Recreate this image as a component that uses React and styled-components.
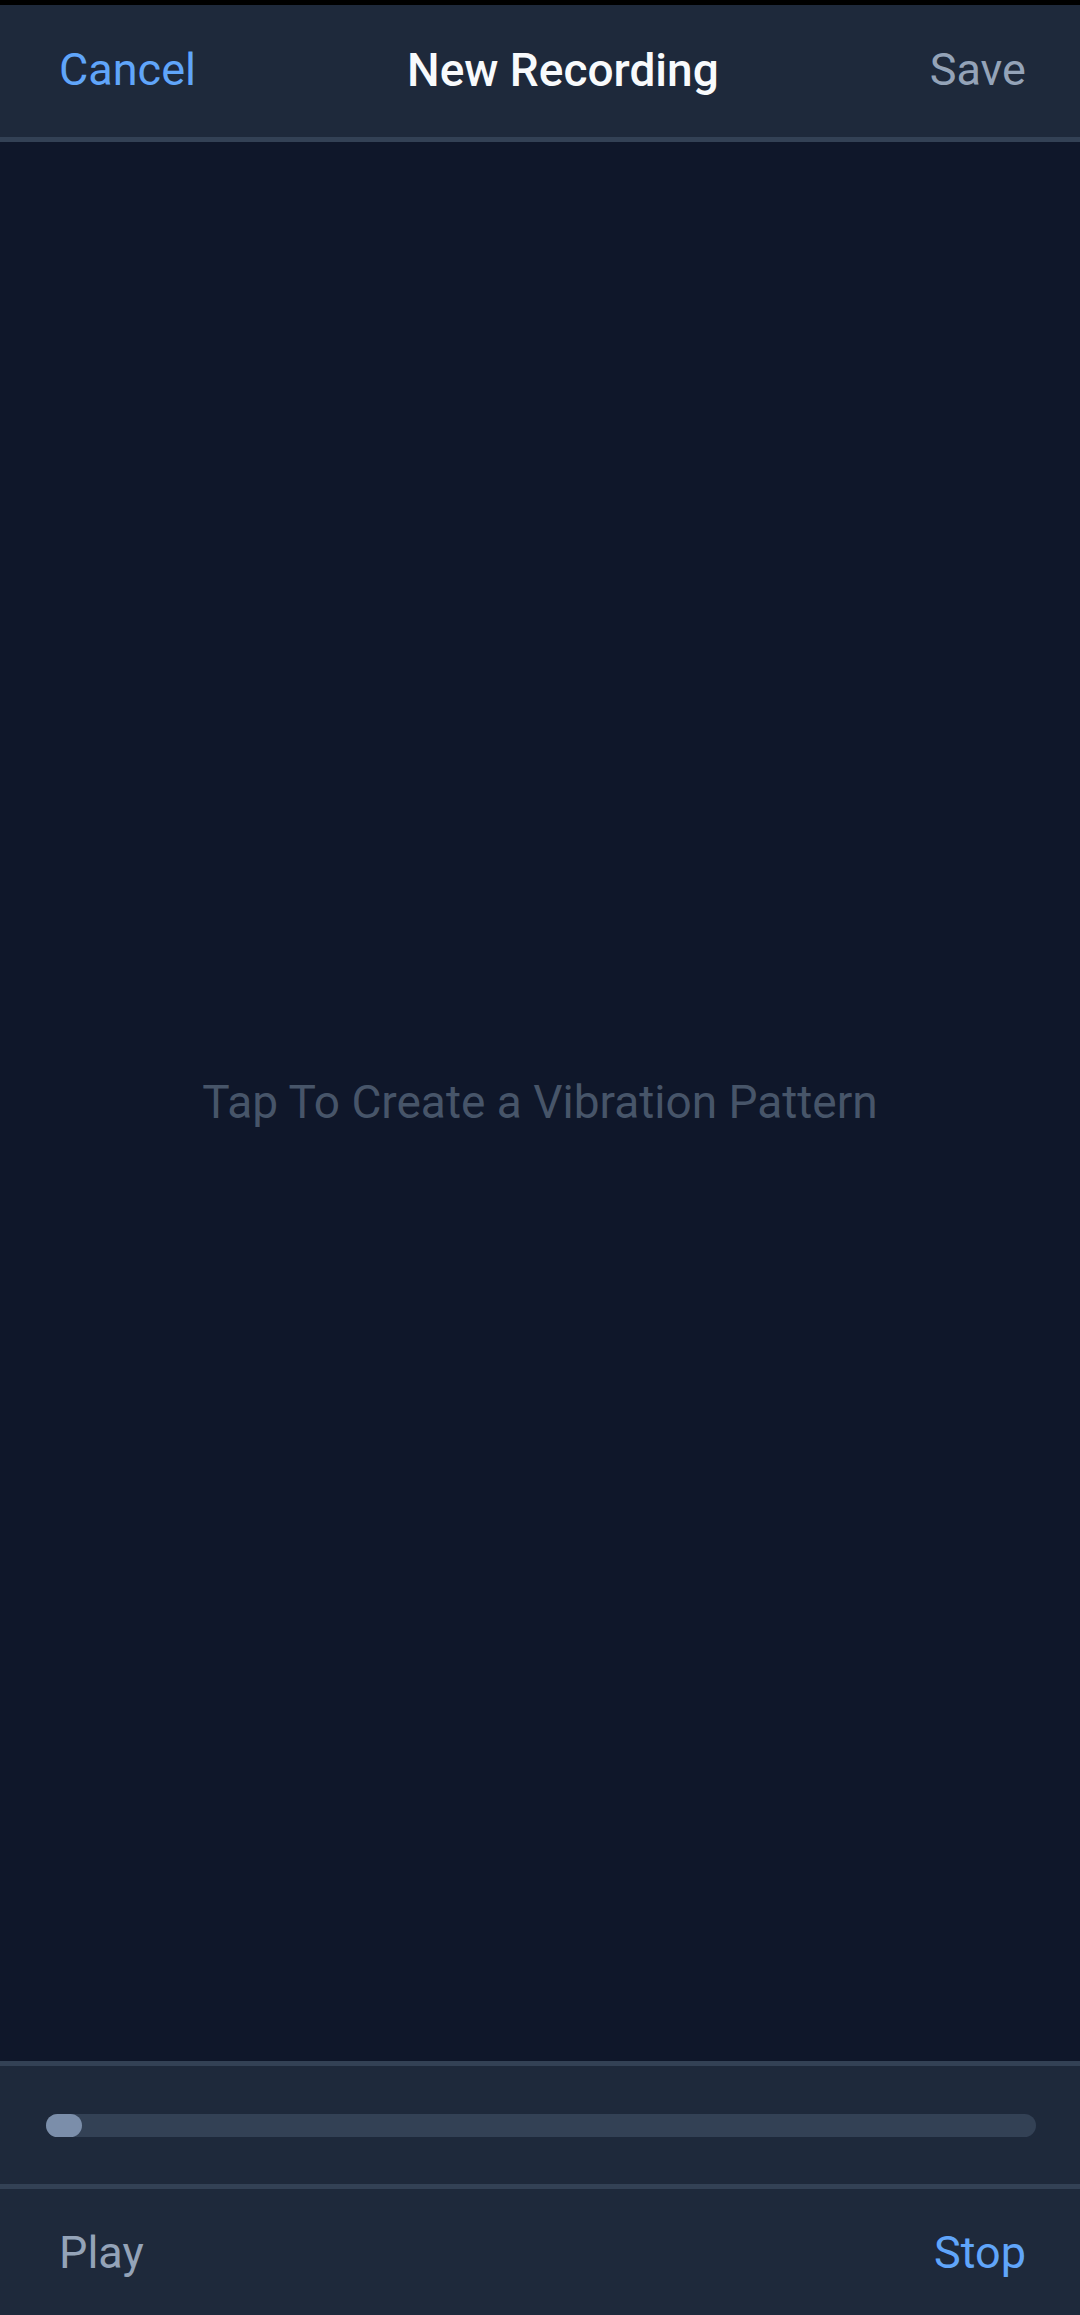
import React from 'react';
import styled, { createGlobalStyle } from 'styled-components';

const STATUS_BLACK = '#000000';
const PANEL_BG = '#1e293b';
const CANVAS_BG = '#0f172a';
const DIVIDER = '#334155';
const ACCENT_BLUE = '#60a5fa';
const MUTED_TEXT = '#94a3b8';
const HINT_TEXT = '#475569';
const THUMB_COLOR = '#7b8eaa';

const GlobalStyle = createGlobalStyle`
  html, body {
    margin: 0;
    padding: 0;
    background: ${CANVAS_BG};
  }
  #root {
    height: 100vh;
  }
`;

const Screen = styled.div`
  height: 100vh;
  display: flex;
  flex-direction: column;
  font-family: Roboto, "Noto Sans", "Liberation Sans", sans-serif;
  background: ${CANVAS_BG};
`;

const StatusStrip = styled.div`
  height: 5px;
  background: ${STATUS_BLACK};
  flex-shrink: 0;
`;

const TopBar = styled.header`
  height: 129px;
  flex-shrink: 0;
  background: ${PANEL_BG};
  border-bottom: 5px solid ${DIVIDER};
  display: flex;
  align-items: center;
  justify-content: space-between;
  padding: 0 54px 3px 59px;
`;

const TextButton = styled.button`
  background: none;
  border: none;
  padding: 0;
  font-family: inherit;
  font-size: 45px;
  font-weight: 400;
  color: ${(p) => (p.$accent ? ACCENT_BLUE : MUTED_TEXT)};
  cursor: pointer;
`;

const Title = styled.h1`
  margin: 0;
  font-size: 46px;
  font-weight: 500;
  color: #f8fafc;
`;

const TapArea = styled.main`
  flex: 1;
  display: flex;
  align-items: center;
  justify-content: center;
`;

const Hint = styled.p`
  margin: 0;
  font-size: 46px;
  color: ${HINT_TEXT};
`;

const ProgressPanel = styled.section`
  height: 118px;
  flex-shrink: 0;
  background: ${PANEL_BG};
  border-top: 5px solid ${DIVIDER};
  border-bottom: 5px solid ${DIVIDER};
  display: flex;
  align-items: center;
  padding: 0 44px 0 46px;
`;

const Track = styled.div`
  flex: 1;
  height: 23px;
  border-radius: 12px;
  background: ${DIVIDER};
  display: flex;
`;

const Thumb = styled.div`
  width: 36px;
  height: 23px;
  border-radius: 12px;
  background: ${THUMB_COLOR};
`;

const BottomBar = styled.footer`
  height: 126px;
  flex-shrink: 0;
  background: ${PANEL_BG};
  display: flex;
  align-items: center;
  justify-content: space-between;
  padding: 0 54px 0 59px;
`;

export default function App() {
  return (
    <>
      <GlobalStyle />
      <Screen>
        <StatusStrip />
        <TopBar>
          <TextButton $accent>Cancel</TextButton>
          <Title>New Recording</Title>
          <TextButton>Save</TextButton>
        </TopBar>
        <TapArea>
          <Hint>Tap To Create a Vibration Pattern</Hint>
        </TapArea>
        <ProgressPanel>
          <Track>
            <Thumb />
          </Track>
        </ProgressPanel>
        <BottomBar>
          <TextButton>Play</TextButton>
          <TextButton $accent>Stop</TextButton>
        </BottomBar>
      </Screen>
    </>
  );
}
